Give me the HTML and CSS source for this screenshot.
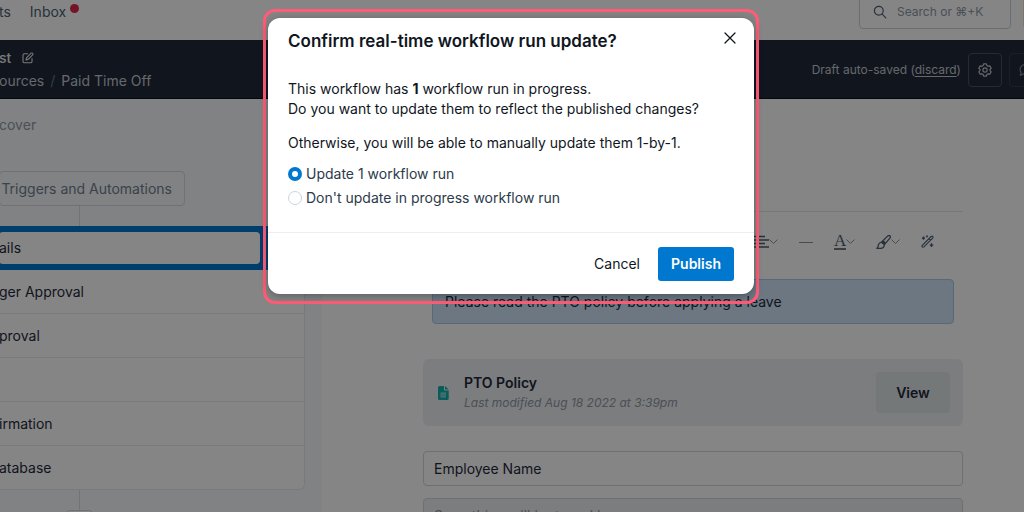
FILE: index.html
```html
<!DOCTYPE html>
<html lang="en">
<head>
  <meta charset="UTF-8" />
  <meta name="viewport" content="width=device-width, initial-scale=1.0" />
  <title>Paid Time Off - Workflow</title>
  <link rel="stylesheet" href="styles.css">
</head>
<body>
  <div class="app">
    <header class="topbar">
      <nav class="topnav">
        <a href="#">ts</a>
        <a href="#" class="inbox">Inbox<span class="dot"></span></a>
      </nav>
      <div class="topbar-right">
        <label class="search">
          <svg width="14" height="14" viewBox="0 0 14 14" fill="none" stroke="currentColor" stroke-width="1.2" stroke-linecap="round"><circle cx="5.8" cy="5.8" r="4.4"/><path d="M9.2 9.2l3.6 3.6"/></svg>
          <input type="text" placeholder="Search or ⌘+K" aria-label="Search">
        </label>
        <div class="avatar"></div>
      </div>
    </header>

    <div class="titlebar">
      <div>
        <div class="title">st
          <svg width="12" height="12" viewBox="0 0 12 12" fill="none" stroke="currentColor" stroke-width="1.1" stroke-linecap="round" stroke-linejoin="round"><path d="M5.6 1.8H2.4Q1 1.8 1 3.2V9.4Q1 10.8 2.4 10.8H8.6Q10 10.8 10 9.4V6.6"/><path d="M4 8l.5-2.2 4.6-4.6q.6-.5 1.2 0l.4.4q.5.6 0 1.2L6.1 7.4z"/></svg>
        </div>
        <div class="crumbs"><a href="#">ources</a><span class="slash">/</span><a href="#">Paid Time Off</a></div>
      </div>
      <div class="title-actions">
        <span class="draft">Draft auto-saved (<a href="#">discard</a>)</span>
        <button class="square" aria-label="Settings">
          <svg width="14" height="14" viewBox="0 0 14 14" fill="none" stroke="currentColor" stroke-width="1.2" stroke-linejoin="round"><path d="M5.6.9h2.8l.5 1.7 1.1.7 1.8-.4 1.4 2.4-1.2 1.2v1.1l1.2 1.2-1.4 2.4-1.8-.4-1.1.7-.5 1.7H5.6l-.5-1.7-1.1-.7-1.8.4L.8 8.8 2 7.6V6.5L.8 5.3l1.4-2.4 1.8.4 1.1-.7z"/><circle cx="7" cy="7" r="2.1"/></svg>
        </button>
        <button class="square faded" aria-label="Comments">
          <svg width="14" height="14" viewBox="0 0 14 14" fill="none" stroke="currentColor" stroke-width="1.2" stroke-linejoin="round"><path d="M7 1.5a5.5 5 0 1 1-2.6 9.4L1.2 12.5l1-3A5.5 5 0 0 1 7 1.5z"/></svg>
        </button>
      </div>
    </div>

    <div class="content">
      <aside class="steps">
        <a href="#" class="discover">cover</a>
        <button class="triggers">Triggers and Automations</button>
        <div class="connector"></div>
        <div class="step-list">
          <div class="step active"><div class="step-name">ails</div></div>
          <div class="step">ger Approval</div>
          <div class="step">proval</div>
          <div class="step"></div>
          <div class="step">irmation</div>
          <div class="step">atabase</div>
        </div>
        <div class="connector"></div>
        <button class="add" aria-label="Add step"></button>
      </aside>

      <main class="editor">
        <div class="toolbar">
          <button aria-label="Align">
            <svg width="15" height="14" viewBox="0 0 15 14" stroke="currentColor" stroke-width="1.4"><path d="M0 1.5h11M0 5h15M0 8.5h11M0 12h15"/></svg>
            <svg class="chev" width="9" height="6" viewBox="0 0 9 6"><path d="M.5.5l4 4 4-4"/></svg>
          </button>
          <button aria-label="Divider">
            <svg class="chev" width="14" height="6" viewBox="0 0 14 6"><path d="M0 3.5h14"/></svg>
          </button>
          <button aria-label="Text color">
            <span class="letter">A</span>
            <svg class="chev" width="9" height="6" viewBox="0 0 9 6"><path d="M.5.5l4 4 4-4"/></svg>
          </button>
          <button aria-label="Highlight">
            <svg width="15" height="14" viewBox="0 0 15 14" fill="none" stroke="currentColor" stroke-width="1.3" stroke-linejoin="round"><path d="M5.5 7.2L11.8.9q1.3-.8 2.3 0 .6 1-.2 2.2L8.3 9.6"/><path d="M5.5 7.2l2.8 2.4c.3 2.4-1.7 3.9-4 3.7H.8c1.5-.7 1.2-1.7 1.5-3.1.4-1.7 1.5-2.7 3.2-3z"/><path d="M6.5 7.5l1.5 1.4 1-1.3-1.2-1.2z" fill="currentColor"/></svg>
            <svg class="chev" width="9" height="6" viewBox="0 0 9 6"><path d="M.5.5l4 4 4-4"/></svg>
          </button>
          <button aria-label="Magic">
            <svg width="13" height="13" viewBox="0 0 13 13" fill="none" stroke="currentColor" stroke-width="1.1" stroke-linejoin="round"><path d="M1.3 10.3l8.8-8.8q.9-.7 1.6 0t0 1.6l-8.8 8.8q-.9.7-1.6 0t0-1.6zM8 3.6l1.6 1.6"/><path d="M2.5 1.5v3.2M.9 3.1h3.2M10.5 8.3v3.6M8.7 10.1h3.6M6 .4v1.8M5.1 1.3h1.8" stroke-width="1.4"/></svg>
          </button>
        </div>

        <div class="callout">Please read the PTO policy before applying a leave</div>

        <div class="policy">
          <svg width="11" height="14" viewBox="0 0 11 14"><path d="M1.5 0H6v4.5h4.7V12.5q0 1.5-1.5 1.5H1.5Q0 14 0 12.5v-11Q0 0 1.5 0z" fill="#14b0ac"/><path d="M7 0l3.7 3.6H7z" fill="#14b0ac"/><path d="M2.5 6.5h5.5v5H2.5z" fill="#9adfdd"/><path d="M2.5 8.2h5.5M2.5 9.9h5.5" stroke="#14b0ac" stroke-width=".5"/></svg>
          <div class="policy-text">
            <div class="policy-name">PTO Policy</div>
            <div class="policy-date">Last modified Aug 18 2022 at 3:39pm</div>
          </div>
          <button class="view">View</button>
        </div>

        <input class="field" type="text" value="Employee Name" aria-label="Field name">
        <input class="field answer" type="text" placeholder="Something will be typed here" aria-label="Answer">
      </main>
    </div>
  </div>

  <div class="overlay">
    <div class="highlight">
      <div class="modal" role="dialog" aria-labelledby="modal-title">
        <div class="modal-head">
          <h2 id="modal-title">Confirm real-time workflow run update?</h2>
          <button class="close" aria-label="Close">
            <svg width="12" height="12" viewBox="0 0 12 12" stroke="currentColor" stroke-width="1.3" stroke-linecap="round"><path d="M1 1l10 10M11 1L1 11"/></svg>
          </button>
        </div>
        <div class="modal-body">
          <p>This workflow has <b>1</b> workflow run in progress.<br>Do you want to update them to reflect the published changes?</p>
          <p>Otherwise, you will be able to manually update them 1-by-1.</p>
          <div class="options">
            <label><input type="radio" name="update" checked>Update 1 workflow run</label>
            <label><input type="radio" name="update">Don't update in progress workflow run</label>
          </div>
        </div>
        <div class="modal-foot">
          <button class="cancel">Cancel</button>
          <button class="publish">Publish</button>
        </div>
      </div>
    </div>
  </div>
</body>
</html>
```
FILE: styles.css
```css
* {
  box-sizing: border-box;
}
html, body {
  height: 100%;
  overflow: hidden;
}
body {
  margin: 0;
  font-family: Inter, "Liberation Sans", sans-serif;
  font-size: 14px;
  line-height: 20px;
  color: #1f2a3a;
  background-color: #fff;
}
button, input {
  font: inherit;
  color: inherit;
}
button {
  padding: 0;
  border: none;
  background: none;
}
a {
  color: inherit;
  text-decoration: none;
}
svg {
  flex: none;
}

/* page is scrolled a little, so it starts outside the window */
.app {
  margin: -16px 0 0 -1px;
}

/* top bar */
.topbar {
  display: flex;
  justify-content: space-between;
  align-items: center;
  height: 56px;
  color: #4b5f73;
}
.topnav {
  display: flex;
  gap: 19px;
}
.inbox {
  display: flex;
  gap: 4px;
}
.dot {
  width: 9px;
  height: 9px;
  margin-top: 2px;
  border-radius: 50%;
  background-color: #e0264b;
}
.topbar-right {
  display: flex;
  gap: 12px;
  margin-right: -31px;
}
.search {
  display: flex;
  align-items: center;
  gap: 10px;
  width: 152px;
  height: 33px;
  padding-left: 13px;
  border: 1px solid #c9d3da;
  border-radius: 4px;
}
.search input {
  width: 110px;
  padding: 0;
  border: none;
  background: none;
  font-size: 12px;
}
.search input::placeholder {
  color: #8d99a5;
}
.avatar {
  width: 32px;
  height: 32px;
  border-radius: 4px;
  background-color: #f5e3c4;
}

/* title bar */
.titlebar {
  display: flex;
  justify-content: space-between;
  align-items: center;
  height: 59px;
  padding-top: 1px;
  border-bottom: 1px solid #0a0f18;
  background-color: #1f2a3a;
  color: #c3c8ce;
}
.title {
  display: flex;
  align-items: center;
  gap: 11px;
  margin-bottom: 3px;
  font-weight: 500;
  color: #e6e8eb;
}
.crumbs {
  display: flex;
  gap: 6px;
}
.slash {
  color: #6a7482;
}
.title-actions {
  display: flex;
  align-items: center;
  gap: 7px;
  margin-right: -19px;
}
.draft {
  font-size: 12px;
}
.draft a {
  text-decoration: underline;
  text-underline-offset: 2px;
}
.square {
  display: flex;
  align-items: center;
  justify-content: center;
  width: 34px;
  height: 34px;
  border: 1px solid #4a5462;
  border-radius: 4px;
}
.faded {
  border-color: #343f4e;
  color: #7c8590;
}

.content {
  display: grid;
  grid-template-columns: 323px 1fr;
}

/* workflow steps */
.steps {
  display: flex;
  flex-direction: column;
  align-items: flex-start;
  padding: 16px 17px 0 0;
  background-color: #f8fafd;
}
.discover {
  color: #8d99a5;
}
.triggers {
  width: 186px;
  height: 35px;
  margin-top: 36px;
  padding-right: 12px;
  border: 1px solid #d3dae2;
  border-radius: 4px;
  text-align: right;
  color: #6f7f90;
}
.connector {
  width: 1px;
  height: 20px;
  margin-left: 80px;
  background-color: #d9dfe6;
}
.step-list {
  width: 100%;
  border-right: 1px solid #e6eaee;
  border-bottom: 1px solid #e6eaee;
  border-radius: 0 0 6px 0;
  background-color: #fff;
}
.step {
  height: 44px;
  padding: 12px 0;
  border-bottom: 1px solid #e6eaee;
}
.step:last-child {
  height: 43px;
  border-bottom: none;
}
.step.active {
  padding: 6px 44px 6px 0;
  border: none;
  background-color: #0078d0;
}
.step-name {
  height: 32px;
  padding: 6px 0;
  border-radius: 4px;
  background-color: #fff;
}
.add {
  width: 27px;
  height: 27px;
  margin-left: 67px;
  border: 1px solid #d3dae2;
  border-radius: 4px;
  background-color: #fff;
}

/* form editor */
.editor {
  padding: 112px 61px 0 101px;
}
.toolbar {
  display: flex;
  align-items: center;
  justify-content: flex-end;
  gap: 21px;
  height: 60px;
  padding-right: 29px;
  border-top: 1px solid #e3e6e9;
  color: #4b5f73;
}
.toolbar button {
  display: flex;
  align-items: center;
}
.chev {
  fill: none;
  stroke: #8a939c;
}
.letter {
  width: 12px;
  border-bottom: 2px solid #777;
  font: 17px/14px "Liberation Serif", serif;
}
.callout {
  height: 45px;
  margin: 8px 9px 35px;
  padding: 12px;
  border: 1px solid #a9c8e8;
  border-radius: 4px;
  background-color: #cfe4fa;
}
.policy {
  display: flex;
  align-items: center;
  height: 67px;
  padding: 0 13px 0 15px;
  border-radius: 6px;
  background-color: #edeff3;
}
.policy-text {
  flex: 1;
  margin-left: 15px;
}
.policy-name {
  font-weight: 600;
}
.policy-date {
  font-size: 12px;
  font-style: italic;
  color: #8d99a5;
}
.view {
  width: 74px;
  height: 41px;
  border-radius: 4px;
  background-color: #dfe6e9;
  font-weight: 600;
}
.field {
  display: block;
  width: 100%;
  height: 35px;
  margin-top: 25px;
  padding: 0 10px;
  border: 1px solid #d0d6dc;
  border-radius: 4px;
  background-color: #fff;
}
.answer {
  margin-top: 12px;
  background-color: #edeff3;
}
.answer::placeholder {
  color: #8d99a5;
}

/* dialog */
.overlay {
  position: absolute;
  inset: 0;
  display: flex;
  justify-content: center;
  align-items: flex-start;
  padding: 9px 2px 0 0;
  background-color: rgba(0, 0, 0, 0.48);
}
.highlight {
  padding: 6px 2px 7px;
  border: 3px solid #ff5c77;
  border-radius: 12px;
}
.modal {
  width: 486px;
  border-radius: 12px;
  background-color: #fff;
  box-shadow: 0 2px 8px rgba(0, 0, 0, 0.3);
  color: #10161e;
}
.modal-head {
  display: flex;
  justify-content: space-between;
  padding: 11px 17px 0 20px;
}
.modal-head h2 {
  margin: 0;
  font-size: 17px;
  font-weight: 600;
  line-height: 24px;
}
.close {
  display: flex;
  align-items: center;
  justify-content: center;
  width: 14px;
  height: 18px;
}
.modal-body {
  padding: 26px 20px 24px;
  border-bottom: 1px solid #eceef1;
}
.modal-body p {
  margin: 0 0 14px;
}
.options {
  display: flex;
  flex-direction: column;
  gap: 4px;
  margin-top: -3px;
  color: #2c3a4b;
}
.options label {
  display: flex;
  align-items: center;
  gap: 4px;
}
.options input {
  appearance: none;
  width: 14px;
  height: 14px;
  margin: 0;
  border: 1px solid #cbd5dd;
  border-radius: 50%;
}
.options input:checked {
  border: 4px solid #0078d0;
}
.modal-foot {
  display: flex;
  justify-content: flex-end;
  gap: 18px;
  padding: 14px 20px 13px;
}
.publish {
  width: 76px;
  height: 34px;
  border-radius: 3px;
  background-color: #0078d0;
  font-weight: 600;
  color: #fff;
}
```
